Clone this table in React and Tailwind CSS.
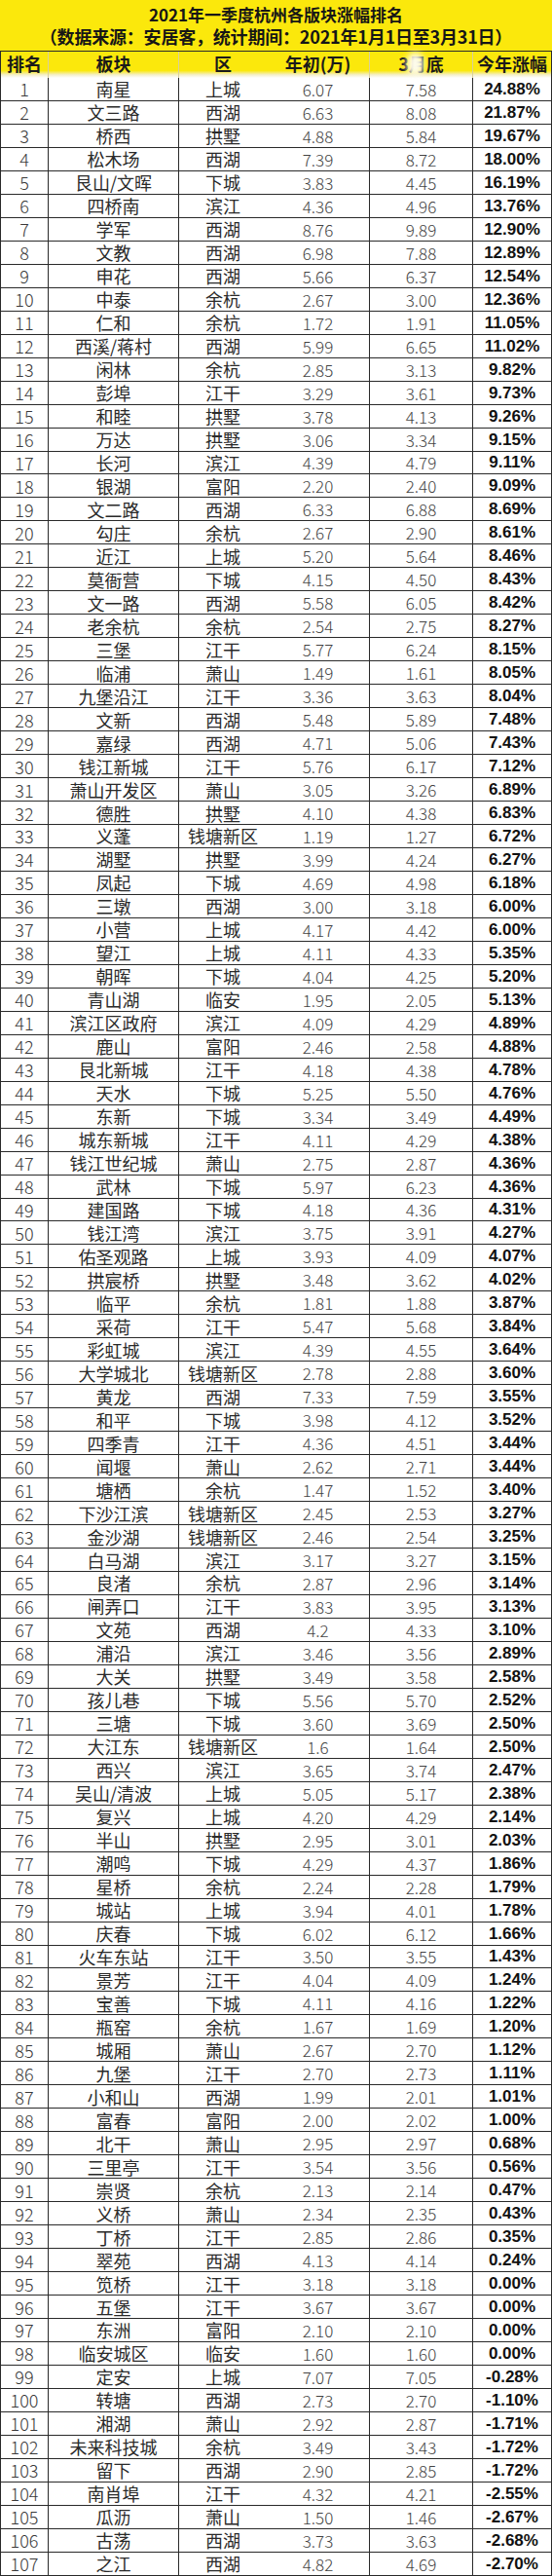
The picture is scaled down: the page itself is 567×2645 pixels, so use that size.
const rows = [
  "1 南星 上城 6.07 7.58 24.88%",
  "2 文三路 西湖 6.63 8.08 21.87%",
  "3 桥西 拱墅 4.88 5.84 19.67%",
  "4 松木场 西湖 7.39 8.72 18.00%",
  "5 艮山/文晖 下城 3.83 4.45 16.19%",
  "6 四桥南 滨江 4.36 4.96 13.76%",
  "7 学军 西湖 8.76 9.89 12.90%",
  "8 文教 西湖 6.98 7.88 12.89%",
  "9 申花 西湖 5.66 6.37 12.54%",
  "10 中泰 余杭 2.67 3.00 12.36%",
  "11 仁和 余杭 1.72 1.91 11.05%",
  "12 西溪/蒋村 西湖 5.99 6.65 11.02%",
  "13 闲林 余杭 2.85 3.13 9.82%",
  "14 彭埠 江干 3.29 3.61 9.73%",
  "15 和睦 拱墅 3.78 4.13 9.26%",
  "16 万达 拱墅 3.06 3.34 9.15%",
  "17 长河 滨江 4.39 4.79 9.11%",
  "18 银湖 富阳 2.20 2.40 9.09%",
  "19 文二路 西湖 6.33 6.88 8.69%",
  "20 勾庄 余杭 2.67 2.90 8.61%",
  "21 近江 上城 5.20 5.64 8.46%",
  "22 莫衙营 下城 4.15 4.50 8.43%",
  "23 文一路 西湖 5.58 6.05 8.42%",
  "24 老余杭 余杭 2.54 2.75 8.27%",
  "25 三堡 江干 5.77 6.24 8.15%",
  "26 临浦 萧山 1.49 1.61 8.05%",
  "27 九堡沿江 江干 3.36 3.63 8.04%",
  "28 文新 西湖 5.48 5.89 7.48%",
  "29 嘉绿 西湖 4.71 5.06 7.43%",
  "30 钱江新城 江干 5.76 6.17 7.12%",
  "31 萧山开发区 萧山 3.05 3.26 6.89%",
  "32 德胜 拱墅 4.10 4.38 6.83%",
  "33 义蓬 钱塘新区 1.19 1.27 6.72%",
  "34 湖墅 拱墅 3.99 4.24 6.27%",
  "35 凤起 下城 4.69 4.98 6.18%",
  "36 三墩 西湖 3.00 3.18 6.00%",
  "37 小营 上城 4.17 4.42 6.00%",
  "38 望江 上城 4.11 4.33 5.35%",
  "39 朝晖 下城 4.04 4.25 5.20%",
  "40 青山湖 临安 1.95 2.05 5.13%",
  "41 滨江区政府 滨江 4.09 4.29 4.89%",
  "42 鹿山 富阳 2.46 2.58 4.88%",
  "43 艮北新城 江干 4.18 4.38 4.78%",
  "44 天水 下城 5.25 5.50 4.76%",
  "45 东新 下城 3.34 3.49 4.49%",
  "46 城东新城 江干 4.11 4.29 4.38%",
  "47 钱江世纪城 萧山 2.75 2.87 4.36%",
  "48 武林 下城 5.97 6.23 4.36%",
  "49 建国路 下城 4.18 4.36 4.31%",
  "50 钱江湾 滨江 3.75 3.91 4.27%",
  "51 佑圣观路 上城 3.93 4.09 4.07%",
  "52 拱宸桥 拱墅 3.48 3.62 4.02%",
  "53 临平 余杭 1.81 1.88 3.87%",
  "54 采荷 江干 5.47 5.68 3.84%",
  "55 彩虹城 滨江 4.39 4.55 3.64%",
  "56 大学城北 钱塘新区 2.78 2.88 3.60%",
  "57 黄龙 西湖 7.33 7.59 3.55%",
  "58 和平 下城 3.98 4.12 3.52%",
  "59 四季青 江干 4.36 4.51 3.44%",
  "60 闻堰 萧山 2.62 2.71 3.44%",
  "61 塘栖 余杭 1.47 1.52 3.40%",
  "62 下沙江滨 钱塘新区 2.45 2.53 3.27%",
  "63 金沙湖 钱塘新区 2.46 2.54 3.25%",
  "64 白马湖 滨江 3.17 3.27 3.15%",
  "65 良渚 余杭 2.87 2.96 3.14%",
  "66 闸弄口 江干 3.83 3.95 3.13%",
  "67 文苑 西湖 4.2 4.33 3.10%",
  "68 浦沿 滨江 3.46 3.56 2.89%",
  "69 大关 拱墅 3.49 3.58 2.58%",
  "70 孩儿巷 下城 5.56 5.70 2.52%",
  "71 三塘 下城 3.60 3.69 2.50%",
  "72 大江东 钱塘新区 1.6 1.64 2.50%",
  "73 西兴 滨江 3.65 3.74 2.47%",
  "74 吴山/清波 上城 5.05 5.17 2.38%",
  "75 复兴 上城 4.20 4.29 2.14%",
  "76 半山 拱墅 2.95 3.01 2.03%",
  "77 潮鸣 下城 4.29 4.37 1.86%",
  "78 星桥 余杭 2.24 2.28 1.79%",
  "79 城站 上城 3.94 4.01 1.78%",
  "80 庆春 下城 6.02 6.12 1.66%",
  "81 火车东站 江干 3.50 3.55 1.43%",
  "82 景芳 江干 4.04 4.09 1.24%",
  "83 宝善 下城 4.11 4.16 1.22%",
  "84 瓶窑 余杭 1.67 1.69 1.20%",
  "85 城厢 萧山 2.67 2.70 1.12%",
  "86 九堡 江干 2.70 2.73 1.11%",
  "87 小和山 西湖 1.99 2.01 1.01%",
  "88 富春 富阳 2.00 2.02 1.00%",
  "89 北干 萧山 2.95 2.97 0.68%",
  "90 三里亭 江干 3.54 3.56 0.56%",
  "91 崇贤 余杭 2.13 2.14 0.47%",
  "92 义桥 萧山 2.34 2.35 0.43%",
  "93 丁桥 江干 2.85 2.86 0.35%",
  "94 翠苑 西湖 4.13 4.14 0.24%",
  "95 笕桥 江干 3.18 3.18 0.00%",
  "96 五堡 江干 3.67 3.67 0.00%",
  "97 东洲 富阳 2.10 2.10 0.00%",
  "98 临安城区 临安 1.60 1.60 0.00%",
  "99 定安 上城 7.07 7.05 -0.28%",
  "100 转塘 西湖 2.73 2.70 -1.10%",
  "101 湘湖 萧山 2.92 2.87 -1.71%",
  "102 未来科技城 余杭 3.49 3.43 -1.72%",
  "103 留下 西湖 2.90 2.85 -1.72%",
  "104 南肖埠 江干 4.32 4.21 -2.55%",
  "105 瓜沥 萧山 1.50 1.46 -2.67%",
  "106 古荡 西湖 3.73 3.63 -2.68%",
  "107 之江 西湖 4.82 4.69 -2.70%",
];

const cols = "grid grid-cols-[49px_134px_90px_106px_106px_1fr]";

function Row({ line }) {
  const [rank, name, district, start, end, pct] = line.split(" ");
  return (
    <div className={`${cols} h-[23.97px] border-b border-[#2a2a2a] leading-none`}>
      <div className="flex items-center justify-center border-r border-[#2a2a2a] text-[18px] font-light text-[#3a3a3a]">
        {rank}
      </div>
      <div className="flex items-center justify-center border-r border-[#2a2a2a] text-[18px] text-[#2a2a2a]">
        {name}
      </div>
      <div className="flex items-center justify-center text-[18px] text-[#2a2a2a]">
        {district}
      </div>
      <div className="flex items-center justify-center border-r border-[#2a2a2a] text-[17px] font-light text-[#444]">
        {start}
      </div>
      <div className="flex items-center justify-center border-r border-[#2a2a2a] text-[17px] font-light text-[#444]">
        {end}
      </div>
      <div className="flex items-center justify-center font-['Liberation_Sans',sans-serif] text-[17px] font-bold text-[#111]">
        {pct}
      </div>
    </div>
  );
}

function HeaderCell({ children, line = true }) {
  return (
    <div
      className={`flex items-center justify-center pb-1 text-[18px] font-bold text-[#1a1a1a] ${
        line ? "border-r border-[#d8cf9a]" : ""
      }`}
    >
      {children}
    </div>
  );
}

export default function App() {
  return (
    <div className="w-full bg-white font-['Noto_Sans_CJK_SC','Noto_Sans',sans-serif]">
      <div className="flex h-[52px] flex-col items-center justify-center bg-[#fbe80c] leading-[23px] text-[#161616]">
        <div className="text-[17px] font-bold">2021年一季度杭州各版块涨幅排名</div>
        <div className="text-[18px] font-bold tracking-[-0.2px]">（数据来源：安居客，统计期间：2021年1月1日至3月31日）</div>
      </div>
      <div className="border-x border-[#2a2a2a]">
        <div
          className={`${cols} h-[28px] border-t border-[#2a2a2a] bg-[linear-gradient(to_bottom,#fbe80c_0%,#fbe80c_72%,#f4efc9_88%,#ffffff_100%)] leading-none`}
        >
          <HeaderCell>排名</HeaderCell>
          <HeaderCell>板块</HeaderCell>
          <HeaderCell line={false}>区</HeaderCell>
          <HeaderCell>年初(万)</HeaderCell>
          <HeaderCell>
            <span className="relative">
              3月底
              <span className="absolute left-[9px] top-[-2px] h-[24px] w-[17px] rounded-full bg-[#fdfbea] blur-[3px]" />
            </span>
          </HeaderCell>
          <HeaderCell line={false}>今年涨幅</HeaderCell>
        </div>
        {rows.map((line) => (
          <Row key={line} line={line} />
        ))}
      </div>
    </div>
  );
}
